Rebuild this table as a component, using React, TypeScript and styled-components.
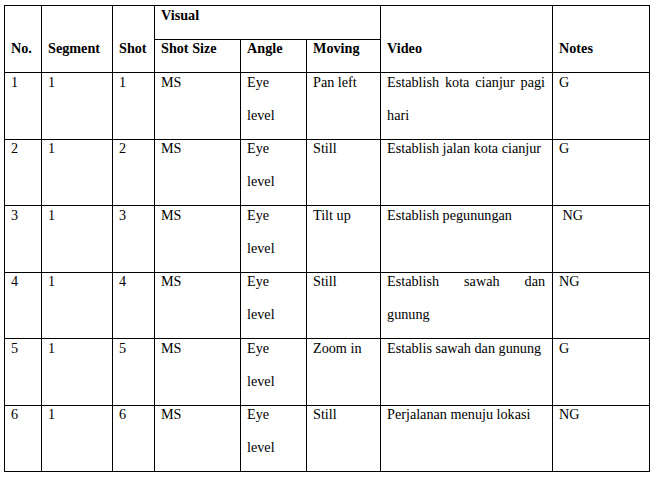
import React from "react";
import styled, { createGlobalStyle } from "styled-components";

const Global = createGlobalStyle`
  html, body { margin: 0; padding: 0; background: #ffffff; }
  body { font-family: "Liberation Serif", "Times New Roman", serif; color: #000; }
`;

const Page = styled.div`
  padding: 5px 0 0 4px;
`;

const Table = styled.table`
  border-collapse: collapse;
  table-layout: fixed;
  width: 646px;
  font-family: "Liberation Serif", "Times New Roman", serif;
  font-size: 14.2px;
  color: #000;
`;

const HeadRow = styled.tr<{ $h: number }>`
  height: ${(p) => p.$h}px;
`;

const BodyRow = styled.tr`
  height: 66.5px;
`;

const HeadCell = styled.th<{ $top?: boolean }>`
  border: 1px solid #000;
  font-weight: bold;
  text-align: left;
  line-height: 16px;
  padding: ${(p) => (p.$top ? "1px 7px 0 6px" : "0 7px 16px 6px")};
  vertical-align: ${(p) => (p.$top ? "top" : "bottom")};
  white-space: nowrap;
`;

const BodyCell = styled.td`
  border: 1px solid #000;
  padding: 0 7px 0 6px;
  vertical-align: top;
  text-align: justify;
  line-height: 33px;
  overflow: hidden;
`;

const CellText = styled.div`
  margin: -7.5px 0 -8px;
`;

const widths = [37, 71, 42, 86, 66, 74, 172, 97];

const rows = [
  ["1", "1", "1", "MS", "Eye level", "Pan left", "Establish kota cianjur pagi hari", "G"],
  ["2", "1", "2", "MS", "Eye level", "Still", "Establish jalan kota cianjur", "G"],
  ["3", "1", "3", "MS", "Eye level", "Tilt up", "Establish pegunungan", "\u00a0NG"],
  ["4", "1", "4", "MS", "Eye level", "Still", "Establish sawah dan gunung", "NG"],
  ["5", "1", "5", "MS", "Eye level", "Zoom in", "Establis sawah dan gunung", "G"],
  ["6", "1", "6", "MS", "Eye level", "Still", "Perjalanan menuju lokasi", "NG"],
];

export default function App() {
  return (
    <Page>
      <Global />
      <Table>
        <colgroup>
          {widths.map((w, i) => (
            <col key={i} style={{ width: w }} />
          ))}
        </colgroup>
        <thead>
          <HeadRow $h={34}>
            <HeadCell rowSpan={2}>No.</HeadCell>
            <HeadCell rowSpan={2}>Segment</HeadCell>
            <HeadCell rowSpan={2}>Shot</HeadCell>
            <HeadCell colSpan={3} $top>
              Visual
            </HeadCell>
            <HeadCell rowSpan={2}>Video</HeadCell>
            <HeadCell rowSpan={2}>Notes</HeadCell>
          </HeadRow>
          <HeadRow $h={33}>
            <HeadCell>Shot Size</HeadCell>
            <HeadCell>Angle</HeadCell>
            <HeadCell>Moving</HeadCell>
          </HeadRow>
        </thead>
        <tbody>
          {rows.map((r, i) => (
            <BodyRow key={i}>
              {r.map((c, j) => (
                <BodyCell key={j}>
                  <CellText>{c}</CellText>
                </BodyCell>
              ))}
            </BodyRow>
          ))}
        </tbody>
      </Table>
    </Page>
  );
}
